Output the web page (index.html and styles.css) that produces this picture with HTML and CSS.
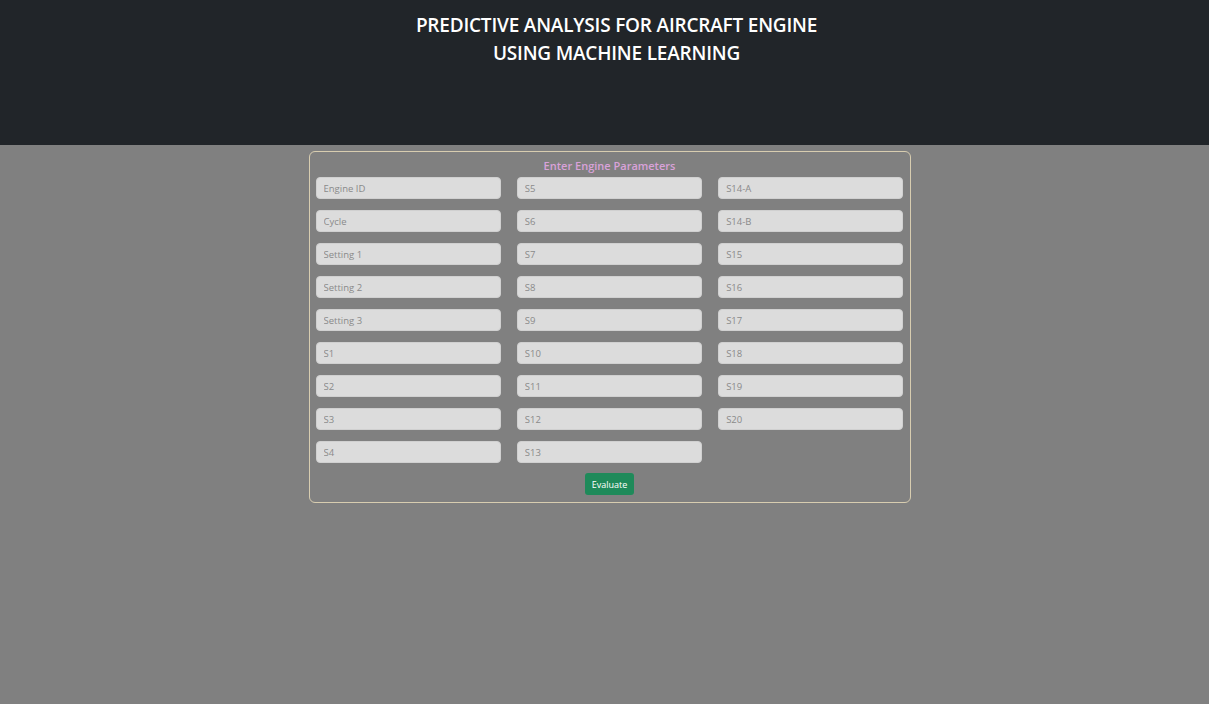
FILE: index.html
```html
<!DOCTYPE html>
<html lang="en">
<head>
<meta charset="utf-8">
<title>Predictive Analysis</title>
<link rel="stylesheet" href="styles.css">
</head>
<body>
<header class="hero">
  <h1 class="hero-title">PREDICTIVE ANALYSIS FOR AIRCRAFT ENGINE<br>USING MACHINE LEARNING</h1>
</header>
<main class="main">
  <form class="card">
    <h2 class="card-title">Enter Engine Parameters</h2>
    <div class="grid">
      <input class="field" placeholder="Engine ID">
      <input class="field" placeholder="Cycle">
      <input class="field" placeholder="Setting 1">
      <input class="field" placeholder="Setting 2">
      <input class="field" placeholder="Setting 3">
      <input class="field" placeholder="S1">
      <input class="field" placeholder="S2">
      <input class="field" placeholder="S3">
      <input class="field" placeholder="S4">
      <input class="field" placeholder="S5">
      <input class="field" placeholder="S6">
      <input class="field" placeholder="S7">
      <input class="field" placeholder="S8">
      <input class="field" placeholder="S9">
      <input class="field" placeholder="S10">
      <input class="field" placeholder="S11">
      <input class="field" placeholder="S12">
      <input class="field" placeholder="S13">
      <input class="field" placeholder="S14-A">
      <input class="field" placeholder="S14-B">
      <input class="field" placeholder="S15">
      <input class="field" placeholder="S16">
      <input class="field" placeholder="S17">
      <input class="field" placeholder="S18">
      <input class="field" placeholder="S19">
      <input class="field" placeholder="S20">
    </div>
    <div class="actions">
      <button type="button" class="btn">Evaluate</button>
    </div>
  </form>
</main>
</body>
</html>
```
FILE: styles.css
```css
* { box-sizing: border-box; }
html, body { margin: 0; padding: 0; }
body {
  background: #808080;
  font-family: "Open Sans", "Noto Sans", sans-serif;
  min-height: 704px;
}
.hero {
  background: #212529;
  height: 145px;
  padding-top: 11px;
  padding-left: 24px;
  text-align: center;
}
.hero-title {
  margin: 0;
  color: #ffffff;
  font-size: 19px;
  font-weight: 600;
  line-height: 28px;
  letter-spacing: -0.2px;
}
.main {
  display: flex;
  justify-content: center;
  padding-top: 6px;
  padding-left: 10px;
}
.card {
  width: 602px;
  border: 1.5px solid #d8cdb0;
  border-radius: 6px;
  padding: 6px 6px 7px 6px;
}
.card-title {
  margin: 0 0 4px;
  text-align: center;
  color: #d9a2d9;
  font-size: 11px;
  font-weight: 600;
  line-height: 15px;
}
.grid {
  display: grid;
  grid-template-columns: repeat(3, 1fr);
  grid-template-rows: repeat(9, 22px);
  grid-auto-flow: column;
  column-gap: 16px;
  row-gap: 11px;
}
.field {
  width: 100%;
  height: 22px;
  border: 1px solid #d0d0d0;
  border-radius: 4px;
  background: #dcdcdc;
  padding: 0 7px;
  font-family: inherit;
  font-size: 9.5px;
  color: #555;
  outline: none;
}
.field::placeholder { color: #8a8a8a; }
.actions {
  display: flex;
  justify-content: center;
  margin-top: 10px;
}
.btn {
  height: 22px;
  padding: 0 7px;
  background: #1f8a5a;
  color: #ffffff;
  border: none;
  border-radius: 3px;
  font-family: inherit;
  font-size: 9px;
  cursor: pointer;
}
```
